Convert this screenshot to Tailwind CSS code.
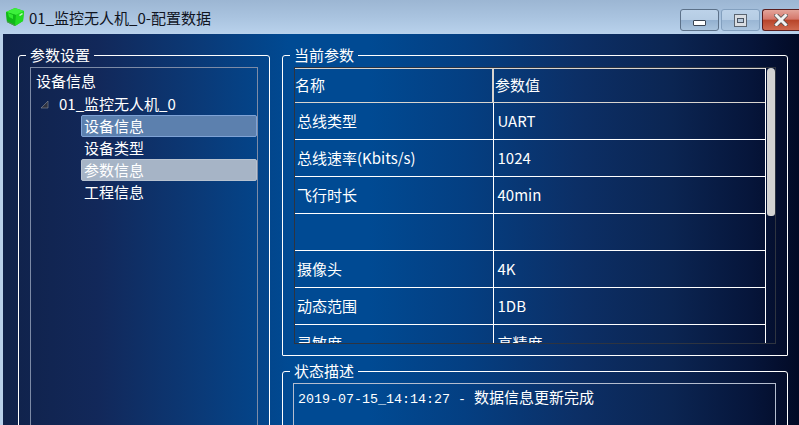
<!DOCTYPE html>
<html lang="zh-CN">
<head>
<meta charset="utf-8" />
<title>01_监控无人机_0-配置数据</title>
<script src="https://cdn.jsdelivr.net/npm/@tailwindcss/browser@4"></script>
</head>
<body class="w-[799px] h-[425px] overflow-hidden bg-[#b9d1ea] font-['Noto_Sans_CJK_SC','Noto_Sans',sans-serif]">

<!-- title bar -->
<div class="h-[34px] flex items-center bg-[linear-gradient(180deg,#9cb6d3_0%,#a9c3df_50%,#b9d2ec_100%)]">
  <svg class="ml-[5px] w-[20px] h-[20px] mt-[-1px]" viewBox="0 0 20 20">
    <path d="M1 5 L10 1 L19 4 L18 14 L10 19 L2 15 Z" fill="#18c818"/>
    <path d="M1 5 L10 1 L19 4 L11 8 Z" fill="#3cf03c"/>
    <path d="M1 5 L11 8 L10 19 L2 15 Z" fill="#10b818"/>
    <path d="M11 8 L19 4 L18 14 L10 19 Z" fill="#22dc22"/>
    <path d="M3 6 L8 8 L8 12 L4 10 Z" fill="#30e830"/>
    <path d="M14 8 l3 -2 l1 1 l-3 2 Z" fill="#c8f8c8"/>
    <path d="M2 14 L10 18 L10 19 L2 15 Z" fill="#5a8a5a"/>
  </svg>
  <span class="ml-[4px] text-[15px] text-[#10141f] leading-none">01_监控无人机_0-配置数据</span>
  <div class="ml-auto flex gap-[2px] self-start pt-[9px]">
    <div class="w-[39px] h-[22px] rounded-[3px] border border-[#5c7189] flex items-center justify-center pt-[6px] bg-[linear-gradient(180deg,#bcd2e9_0%,#b5cce4_50%,#93b0cf_52%,#a9c3dd_100%)]">
      <div class="w-[13px] h-[6px] bg-white border border-[#3a4452] rounded-[1px]"></div>
    </div>
    <div class="w-[39px] h-[22px] rounded-[3px] border border-[#83a0bf] flex items-center justify-center bg-[linear-gradient(180deg,#bcd2e9_0%,#b5cce4_50%,#9ab6d4_52%,#abc5df_100%)]">
      <div class="w-[13px] h-[13px] bg-[#d9dde2] border border-[#5a6470] flex items-center justify-center">
        <div class="w-[7px] h-[5px] border border-[#4a5462] bg-[#b7c9dc]"></div>
      </div>
    </div>
    <div class="w-[37px] h-[22px] rounded-l-[3px] border border-r-0 border-[#5a1d1d] flex items-center justify-center bg-[linear-gradient(180deg,#e3a49a_0%,#d5786c_45%,#b8452a_52%,#cf6a50_100%)]">
      <svg class="w-[14px] h-[12px]" viewBox="0 0 14 12">
        <path d="M2.5 1.5 L11.5 10.5 M11.5 1.5 L2.5 10.5" stroke="#4a4a4a" stroke-width="4.4" stroke-linecap="square"/>
        <path d="M2.5 1.5 L11.5 10.5 M11.5 1.5 L2.5 10.5" stroke="#f2f2f2" stroke-width="3" stroke-linecap="square"/>
      </svg>
    </div>
  </div>
</div>

<!-- client area -->
<div class="ml-[3px] h-[391px] overflow-hidden flex gap-[12px] pl-[15px] pt-[11px] text-white text-[15px] bg-[linear-gradient(90deg,#10224a_0%,#12285a_12%,#0a3a78_25%,#004a93_36%,#004a93_46%,#043f82_58%,#0c2f66_72%,#0b2552_84%,#06153a_94%,#020a26_100%)]">

  <!-- left group -->
  <fieldset class="w-[252px] h-[420px] shrink-0 border border-white rounded-t-[3px] px-[11px]">
    <legend class="ml-[-4px] px-[4px] h-[20px] leading-[20px]">参数设置</legend>
    <div class="h-[400px] mt-[2px] border border-[#7d8ba6] pl-[5px]">
      <div class="h-[28px] leading-[26px]">设备信息</div>
      <div class="h-[20px] -mt-[2px] leading-[20px] flex items-center">
        <svg class="ml-[4px] w-[9px] h-[9px]" viewBox="0 0 9 9"><path d="M8 1 L8 8 L1 8 Z" fill="#2f3340" stroke="#8a909c" stroke-width="0.6"/></svg>
        <span class="ml-[10px]">01_监控无人机_0</span>
      </div>
      <div class="ml-[45px] mt-[1px] w-[176px]">
        <div class="h-[22px] leading-[20px] pl-[2px] rounded-[2px] border border-[#7fa3d6] bg-[#5c80ae]">设备信息</div>
        <div class="h-[22px] leading-[22px] pl-[3px]">设备类型</div>
        <div class="h-[22px] leading-[20px] pl-[2px] rounded-[2px] border border-[#b7c2d0] bg-[#a6b4c6]">参数信息</div>
        <div class="h-[22px] leading-[22px] pl-[3px]">工程信息</div>
      </div>
    </div>
  </fieldset>

  <!-- right column -->
  <div class="w-[506px] shrink-0 flex flex-col gap-[5px]">
    <fieldset class="h-[311px] shrink-0 border border-white rounded-t-[3px] rounded-b-[1px] pl-[11px]">
      <legend class="ml-[-4px] px-[4px] h-[20px] leading-[20px]">当前参数</legend>
      <div class="mt-[2px] w-[482px] h-[277px] border border-[#2e3440] flex overflow-hidden">
        <table class="w-[470px] h-fit shrink-0 table-fixed border-collapse">
          <colgroup><col class="w-[198px]" /><col /></colgroup>
          <tbody>
            <tr class="h-[34px] border-b border-t border-[#d8d4cf]">
              <td class="border-r-2 border-[#d8d4cf]">名称</td>
              <td class="pl-[1px]">参数值</td>
            </tr>
            <tr class="h-[37px] border-b border-white"><td class="border-r border-white pl-[2px]">总线类型</td><td class="pl-[4px]">UART</td></tr>
            <tr class="h-[37px] border-b border-white"><td class="border-r border-white pl-[2px]">总线速率(Kbits/s)</td><td class="pl-[4px]">1024</td></tr>
            <tr class="h-[37px] border-b border-white"><td class="border-r border-white pl-[2px]">飞行时长</td><td class="pl-[4px]">40min</td></tr>
            <tr class="h-[37px] border-b border-white"><td class="border-r border-white"></td><td></td></tr>
            <tr class="h-[37px] border-b border-white"><td class="border-r border-white pl-[2px]">摄像头</td><td class="pl-[4px]">4K</td></tr>
            <tr class="h-[37px] border-b border-white"><td class="border-r border-white pl-[2px]">动态范围</td><td class="pl-[4px]">1DB</td></tr>
            <tr class="h-[37px]"><td class="border-r border-white pl-[2px]">灵敏度</td><td class="pl-[4px]">高精度</td></tr>
          </tbody>
        </table>
        <div class="w-[10px] border-l border-white pl-[1px]">
          <div class="w-[8px] h-[148px] rounded-t-[4px] rounded-b-[3px] bg-[#d2d2d2]"></div>
        </div>
      </div>
    </fieldset>
    <fieldset class="h-[100px] shrink-0 border border-white rounded-t-[3px] pl-[11px]">
      <legend class="ml-[-4px] px-[4px] h-[20px] leading-[20px]">状态描述</legend>
      <div class="ml-[-1px] w-[483px] h-[100px] mt-[2px] border border-[#b4bdcf] pl-[4px] pt-[3px] leading-[20px] whitespace-pre"><span class="font-['Liberation_Mono',monospace] text-[13.33px]">2019-07-15_14:14:27 - </span><span class="text-[15px]">数据信息更新完成</span></div>
    </fieldset>
  </div>
</div>
</body>
</html>
